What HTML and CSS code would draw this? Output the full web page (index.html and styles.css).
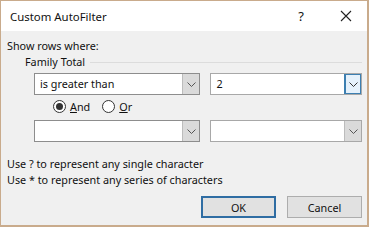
FILE: index.html
```html
<!DOCTYPE html>
<html lang="en">
<head>
    <meta charset="UTF-8">
    <title>Custom AutoFilter</title>
    <link rel="stylesheet" href="styles.css">
</head>
<body>
    <div class="window">
        <div class="titlebar">
            <span class="title">Custom AutoFilter</span>
            <span class="help">?</span>
            <svg class="close" width="12" height="12" viewBox="0 0 12 12"><path d="M1 1L11 11M11 1L1 11" stroke="#222" stroke-width="1.1"/></svg>
        </div>
        <div class="content">
            <div class="label">Show rows where:</div>
            <div class="group-head">
                <span>Family Total</span>
                <div class="rule"></div>
            </div>
            <div class="criteria">
                <div class="combo op">
                    <span class="value">is greater than</span>
                    <span class="drop"><svg width="9" height="5" viewBox="0 0 9 5"><path d="M0.5 0.5L4.5 4.5L8.5 0.5" fill="none" stroke="#555" stroke-width="1"/></svg></span>
                </div>
                <div class="combo val">
                    <span class="value">2</span>
                    <span class="drop hot"><svg width="9" height="5" viewBox="0 0 9 5"><path d="M0.5 0.5L4.5 4.5L8.5 0.5" fill="none" stroke="#333" stroke-width="1"/></svg></span>
                </div>
            </div>
            <div class="radios">
                <label class="radio"><span class="dot checked"></span><span><u>A</u>nd</span></label>
                <label class="radio"><span class="dot"></span><span><u>O</u>r</span></label>
            </div>
            <div class="criteria">
                <div class="combo op">
                    <span class="value"></span>
                    <span class="drop"><svg width="9" height="5" viewBox="0 0 9 5"><path d="M0.5 0.5L4.5 4.5L8.5 0.5" fill="none" stroke="#555" stroke-width="1"/></svg></span>
                </div>
                <div class="combo val">
                    <span class="value"></span>
                    <span class="drop"><svg width="9" height="5" viewBox="0 0 9 5"><path d="M0.5 0.5L4.5 4.5L8.5 0.5" fill="none" stroke="#555" stroke-width="1"/></svg></span>
                </div>
            </div>
            <div class="hints">
                <div>Use ? to represent any single character</div>
                <div>Use * to represent any series of characters</div>
            </div>
            <div class="buttons">
                <button class="btn default">OK</button>
                <button class="btn">Cancel</button>
            </div>
        </div>
    </div>
</body>
</html>
```

FILE: styles.css
```css
body {
    margin: 0;
    font-family: "Noto Sans", "Open Sans", sans-serif;
    font-size: 10.8px;
    color: #111;
    background: #c9ab8c;
}
.window {
    width: 369px;
    height: 226px;
    box-sizing: border-box;
    border: 1px solid #c9ab8c;
    border-right-width: 2px;
    background: #f0f0f0;
    display: flex;
    flex-direction: column;
}
.titlebar {
    height: 30px;
    background: #fff;
    display: flex;
    align-items: center;
    padding-left: 9px;
    flex-shrink: 0;
}
.title {
    font-size: 11.4px;
    flex: 1;
}
.help {
    font-size: 13px;
    margin-right: 36px;
}
.close {
    margin-right: 15px;
}
.content {
    padding: 7px 5px 0 6px;
    display: flex;
    flex-direction: column;
}
.label {
    line-height: 16px;
}
.group-head {
    display: flex;
    align-items: center;
    margin-left: 18px;
    line-height: 16px;
}
.rule {
    flex: 1;
    height: 1px;
    background: #dcdcdc;
    margin-left: 5px;
}
.criteria {
    display: flex;
    gap: 10px;
    margin-left: 27px;
    margin-top: 3px;
}
.combo {
    height: 22px;
    box-sizing: border-box;
    border: 1px solid #8d8d8d;
    background: #fff;
    display: flex;
    align-items: stretch;
}
.combo.op {
    width: 167px;
}
.combo.val {
    width: 152px;
    border-color: #a8a8a8;
}
.value {
    flex: 1;
    padding-left: 5px;
    line-height: 20px;
}
.drop {
    width: 16px;
    background: #dadada;
    border-left: 1px solid #bcbcbc;
    display: flex;
    align-items: center;
    justify-content: center;
}
.drop.hot {
    background: #e5f1fb;
    border-left-color: #3c7fb1;
    box-shadow: inset 0 0 0 1px #3c7fb1;
}
.radios {
    display: flex;
    gap: 12px;
    margin-left: 46px;
    height: 22px;
    align-items: center;
}
.radio {
    display: flex;
    align-items: center;
    gap: 4px;
}
.dot {
    width: 11px;
    height: 11px;
    border: 1px solid #333;
    border-radius: 50%;
    background: #fff;
    display: flex;
    align-items: center;
    justify-content: center;
}
.dot.checked::after {
    content: "";
    width: 7px;
    height: 7px;
    border-radius: 50%;
    background: #333;
}
.hints {
    margin-top: 14px;
    line-height: 16px;
}
.buttons {
    display: flex;
    justify-content: flex-end;
    gap: 11px;
    margin-top: 8px;
}
.btn {
    width: 75px;
    height: 22px;
    font: inherit;
    color: #111;
    background: #e1e1e1;
    border: 1px solid #adadad;
    padding: 0;
}
.btn.default {
    border: 2px solid #2f6da3;
}
```
